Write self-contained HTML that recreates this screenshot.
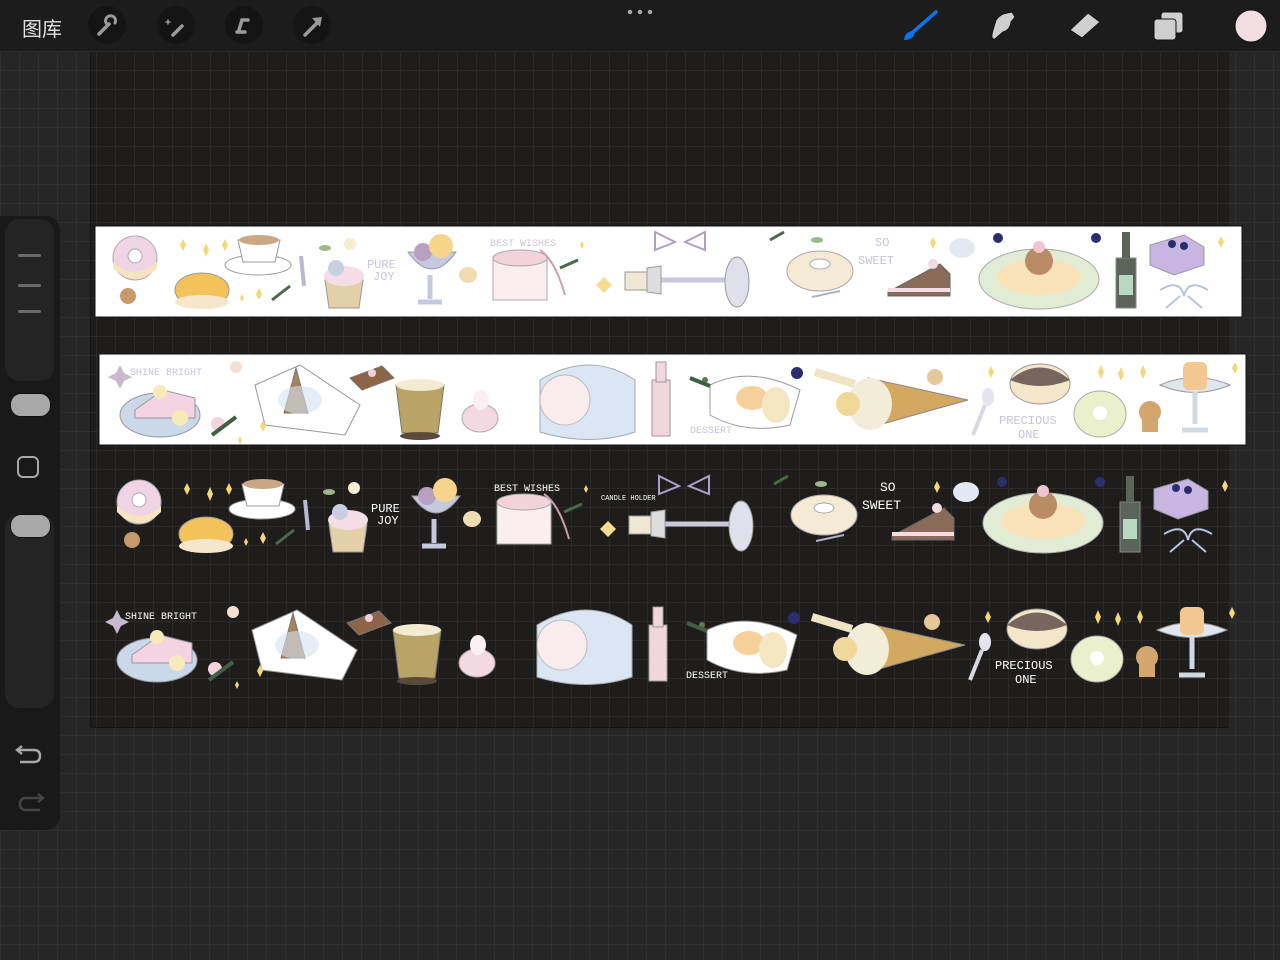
<!DOCTYPE html>
<html><head><meta charset="utf-8"><style>
html,body{margin:0;padding:0;width:1280px;height:960px;overflow:hidden;background:#252525;font-family:"Liberation Sans","Noto Sans CJK SC",sans-serif}
.bg{position:absolute;left:0;top:0;width:1280px;height:960px;background-color:#262626;background-image:linear-gradient(#2f2f2f 1px,transparent 1px),linear-gradient(90deg,#2f2f2f 1px,transparent 1px);background-size:19px 19px;background-position:0 13px}
.canvas{position:absolute;left:91px;top:51px;width:1138px;height:676px;background-color:#1e1d1c;background-image:linear-gradient(#2b2a29 1px,transparent 1px),linear-gradient(90deg,#2b2a29 1px,transparent 1px);background-size:19px 19px;background-position:5px 0;box-shadow:-1px 0 0 #151515,0 1px 0 #151515}
.top{position:absolute;left:0;top:0;width:1280px;height:51px;background:#1c1c1c}
.lib{position:absolute;left:22px;top:13px;color:#e0e0e0;font-size:20px}
.tb{position:absolute;top:6px;width:38px;height:38px;border-radius:50%;background:#141414}
.side{position:absolute;left:0;top:216px;width:60px;height:614px;background:#191919;border-radius:0 14px 14px 0}
.track{position:absolute;left:5px;width:49px;background:#242424;border-radius:14px}
.h{position:absolute;left:10px;width:39px;height:22px;border-radius:11px;background:#a8a8a8;border:1px solid #111}
.dash{position:absolute;left:18px;width:23px;height:3px;border-radius:2px;background:#6a6a6a}
</style></head><body>
<div class="bg"></div>
<div class="canvas"></div>
<div class="top">
 <div class="lib">图库</div>
 <div class="tb" style="left:88px"></div><div class="tb" style="left:157px"></div><div class="tb" style="left:225px"></div><div class="tb" style="left:293px"></div>
 <svg width="1280" height="51" style="position:absolute;left:0;top:0">
  <g fill="none" stroke="#9a9a9a" stroke-width="3.5" stroke-linecap="round">
   <path d="M99 34 L109 24"/><path d="M108 25 a5 5 0 1 1 7 -2" stroke-width="3"/>
   <path d="M173 35 L182 26"/><path d="M168 20 v4 M166 22 h4" stroke-width="1.5"/>
   <path d="M237 32 h8 M248 20 h-6 l-3 10"/>
   <path d="M305 35 L318 22"/>
  </g>
  <path d="M312 18 L322 17 L320 27 Z" fill="#9a9a9a"/>
  <circle cx="630" cy="12" r="2.2" fill="#aaa"/><circle cx="640" cy="12" r="2.2" fill="#aaa"/><circle cx="650" cy="12" r="2.2" fill="#aaa"/>
  <path d="M936 12 L912 33" stroke="#0a74f0" stroke-width="3.5" stroke-linecap="round"/>
  <path d="M904 40 Q905 32 912 31 Q916 34 913 37 Q909 40 904 40Z" fill="#0a74f0"/>
  <path d="M993 30 L996 20 Q1000 14 1007 13 L1012 12 L1015 17 L1011 22 Q1010 30 1003 32 L995 39 Q990 40 993 30Z" fill="#cfcfcf" stroke="#111"/>
  <path d="M1070 30 L1088 13 L1100 22 L1082 38 Z" fill="#cfcfcf" stroke="#111"/>
  <rect x="1161" y="12" width="22" height="21" rx="3" fill="#cfcfcf" stroke="#111"/>
  <rect x="1154" y="19" width="22" height="21" rx="3" fill="#cfcfcf" stroke="#111"/>
  <circle cx="1251" cy="26" r="16" fill="#f2dde2" stroke="#111"/>
 </g></svg>
</div>
<div class="side">
 <div class="track" style="top:3px;height:162px"></div>
 <div class="dash" style="top:38px"></div><div class="dash" style="top:68px"></div><div class="dash" style="top:94px"></div>
 <div class="h" style="top:177px"></div>
 <div style="position:absolute;left:17px;top:240px;width:22px;height:22px;border:2.5px solid #a8a8a8;border-radius:6px;box-sizing:border-box"></div>
 <div class="track" style="top:298px;height:194px"></div>
 <div class="h" style="top:298px"></div>
 <svg width="60" height="100" style="position:absolute;left:0;top:520px">
  <path d="M22 10 L17 14 L22 18 M17 14 H34 Q40 14 40 20 Q40 26 34 26 H20" fill="none" stroke="#a8a8a8" stroke-width="2.4"/>
  <path d="M38 58 L43 62 L38 66 M43 62 H26 Q20 62 20 68 Q20 74 26 74 H40" fill="none" stroke="#444" stroke-width="2.4"/>
 </svg>
</div>
<svg width="1280" height="960" style="position:absolute;left:0;top:0" font-family="Liberation Mono,monospace">
<defs>
<g id="r1">
 <circle cx="135" cy="258" r="22" fill="#f1d4e3" stroke="#aaa"/><circle cx="135" cy="256" r="7" fill="#fff" stroke="#aaa"/>
 <path d="M113 262 Q135 282 157 262 L157 268 Q135 290 113 268Z" fill="#f5e4c0"/>
 <circle cx="128" cy="296" r="8" fill="#c69a6a"/>
 <path d="M180 245 l3 -6 3 6 -3 6z M203 250 l3 -7 3 7 -3 7z M222 245 l3 -6 3 6 -3 6z" fill="#f3d87a"/>
 <ellipse cx="202" cy="290" rx="27" ry="17" fill="#f4c25a" stroke="#999"/>
 <ellipse cx="202" cy="302" rx="27" ry="7" fill="#f6e6cc"/>
 <ellipse cx="258" cy="265" rx="33" ry="10" fill="#fff" stroke="#999"/>
 <path d="M238 240 h42 l-5 22 h-32z" fill="#fff" stroke="#999"/><ellipse cx="259" cy="240" rx="20" ry="5" fill="#c8a882"/>
 <path d="M301 256 l3 30" stroke="#b8b8d0" stroke-width="4"/>
 <path d="M325 280 h38 l-4 28 h-30z" fill="#e3cfa8" stroke="#999"/><ellipse cx="344" cy="276" rx="20" ry="10" fill="#f5dde6"/><circle cx="336" cy="268" r="8" fill="#c9cfe0"/>
 <circle cx="350" cy="244" r="6" fill="#f6ecd0"/>
 <path d="M408 252 Q432 286 456 252Z" fill="#c6c8dd" stroke="#999"/><path d="M430 275 v24 M418 302 h24" stroke="#c6c8dd" stroke-width="5"/>
 <circle cx="423" cy="252" r="9" fill="#b8a0c0"/><circle cx="441" cy="246" r="12" fill="#f6d58a"/>
 <ellipse cx="468" cy="275" rx="9" ry="8" fill="#f0dcb0"/>
 <path d="M493 258 h54 v42 h-54z" fill="#fbeef0" stroke="#aaa"/><ellipse cx="520" cy="258" rx="27" ry="8" fill="#f2d3dc" stroke="#aaa"/>
 <path d="M540 250 Q555 260 565 295" stroke="#c8a0b0" fill="none" stroke-width="2"/>
 <path d="M655 232 l20 10 -20 8z M705 232 l-20 10 20 8z" fill="none" stroke="#b0a0c8" stroke-width="2"/>
 <path d="M596 285 l8 -8 8 8 -8 8z" fill="#f4dc90"/>
 <path d="M625 272 h30 v18 h-30z" fill="#eee8d4" stroke="#999"/>
 <path d="M655 280 h70" stroke="#c8c8d8" stroke-width="5"/><ellipse cx="737" cy="282" rx="12" ry="25" fill="#e0e0ea" stroke="#999"/>
 <path d="M647 268 l14 -2 v28 l-14 -2z" fill="#ddd" stroke="#999"/>
 <ellipse cx="820" cy="271" rx="33" ry="20" fill="#f5ebd4" stroke="#aaa"/><ellipse cx="820" cy="264" rx="10" ry="5" fill="#fff" stroke="#aaa"/>
 <path d="M812 297 l28 -6" stroke="#b0b0c8" stroke-width="2"/>
 <path d="M888 292 l52 -28 10 10 v22 h-62z" fill="#8a6a58" stroke="#666"/><path d="M888 290 h62" stroke="#f5dde6" stroke-width="4"/>
 <circle cx="933" cy="264" r="5" fill="#f0dde2"/>
 <ellipse cx="962" cy="248" rx="13" ry="10" fill="#e4e8f2"/>
 <circle cx="998" cy="238" r="5" fill="#2b2d6e"/><circle cx="1096" cy="238" r="5" fill="#2b2d6e"/>
 <ellipse cx="1039" cy="279" rx="60" ry="30" fill="#e2ecd4" stroke="#aaa"/><ellipse cx="1039" cy="277" rx="42" ry="18" fill="#f9e2b8"/>
 <circle cx="1039" cy="261" r="14" fill="#b98c66"/><circle cx="1039" cy="247" r="6" fill="#f0c4d0"/>
 <path d="M1116 258 h20 v50 h-20z" fill="#5a6458" stroke="#888" /><rect x="1122" y="232" width="8" height="26" fill="#5a6458"/><rect x="1119" y="275" width="14" height="20" fill="#b8d8c0"/>
 <path d="M1150 245 l34 -10 20 12 v18 l-30 10 -24 -10z" fill="#c8b6e2" stroke="#999"/><circle cx="1172" cy="244" r="4" fill="#2b2d6e"/><circle cx="1184" cy="246" r="4" fill="#2b2d6e"/>
 <path d="M1160 290 q20 -12 24 6 q4 -18 24 -6 M1180 296 l-14 12 M1188 296 l14 12" stroke="#b8c4dc" fill="none" stroke-width="2"/>
 <path d="M1218 242 l3 -6 3 6 -3 6z M256 294 l3 -6 3 6 -3 6z M240 298 l2 -4 2 4 -2 4z M580 245 l2 -4 2 4 -2 4z M930 243 l3 -6 3 6 -3 6z" fill="#f3d87a"/>
 <path d="M272 300 l18 -14 M770 240 l14 -8 M560 268 l18 -8" stroke="#4a6a4a" stroke-width="3"/>
 <ellipse cx="325" cy="248" rx="6" ry="3" fill="#9ab888"/><ellipse cx="817" cy="240" rx="6" ry="3" fill="#9ab888"/>
</g>
<g id="r2">
 <path d="M120 365 l4 8 8 4 -8 4 -4 8 -4 -8 -8 -4 8 -4z" fill="#c8b8cc"/>
 <ellipse cx="160" cy="415" rx="40" ry="22" fill="#cad8ea" stroke="#999"/>
 <path d="M135 410 l28 -20 32 8 v20 l-60 0z" fill="#f4d4e2" stroke="#999"/><circle cx="180" cy="418" r="8" fill="#f5eab8"/><circle cx="160" cy="392" r="7" fill="#f5eab8"/>
 <path d="M255 385 l45 -20 60 40 -15 30 -80 -10z" fill="#fff" stroke="#999"/>
 <path d="M296 368 l-12 45 h24z" fill="#a8825a" stroke="#777"/><ellipse cx="300" cy="400" rx="22" ry="14" fill="#d4e2f2" opacity=".6"/>
 <path d="M350 378 l32 -12 12 12 -32 12z" fill="#8c6448" stroke="#777"/><circle cx="372" cy="373" r="4" fill="#f0d0dc"/>
 <path d="M396 385 h48 l-6 48 h-36z" fill="#b9a466" stroke="#777"/><ellipse cx="420" cy="385" rx="24" ry="6" fill="#f3ecd4"/><ellipse cx="420" cy="436" rx="20" ry="4" fill="#5a4a3a"/>
 <ellipse cx="480" cy="418" rx="18" ry="14" fill="#f4d8e2" stroke="#aaa"/><ellipse cx="481" cy="400" rx="8" ry="10" fill="#f8f0f2"/>
 <path d="M540 380 q50 -30 95 0 v52 q-45 15 -95 0z" fill="#dbe6f4" stroke="#aaa"/><ellipse cx="565" cy="400" rx="25" ry="25" fill="#f8ecec" stroke="#bbb"/>
 <path d="M652 380 h18 v56 h-18z" fill="#f2d6de" stroke="#999"/><rect x="656" y="362" width="10" height="20" fill="#f2d6de" stroke="#999"/>
 <circle cx="705" cy="380" r="3" fill="#5a7a5a"/>
 <path d="M710 385 q40 -20 90 5 l-10 35 q-45 10 -80 -10z" fill="#fff" stroke="#999"/><ellipse cx="752" cy="398" rx="16" ry="12" fill="#f6d29a"/><ellipse cx="776" cy="405" rx="14" ry="18" fill="#f4e6c0"/>
 <circle cx="797" cy="373" r="6" fill="#2b2d6e"/>
 <path d="M815 372 l40 12" stroke="#efe4c4" stroke-width="8"/>
 <path d="M868 378 l100 22 -100 28z" fill="#d3a860" stroke="#888"/><ellipse cx="870" cy="404" rx="22" ry="26" fill="#f2edd8"/><circle cx="848" cy="404" r="12" fill="#efd898"/>
 <circle cx="935" cy="377" r="8" fill="#e4c898"/>
 <path d="M985 405 l-12 30" stroke="#d8d8e0" stroke-width="4"/><ellipse cx="988" cy="397" rx="6" ry="9" fill="#e4e4ec"/>
 <ellipse cx="1040" cy="384" rx="30" ry="20" fill="#f4e6c8" stroke="#999"/><path d="M1010 380 q30 -25 60 0 q-30 12 -60 0z" fill="#76665e"/>
 <ellipse cx="1100" cy="414" rx="26" ry="23" fill="#eaf0cc" stroke="#aaa"/><circle cx="1100" cy="413" r="7" fill="#fff"/>
 <circle cx="1150" cy="412" r="11" fill="#d2a66c"/><rect x="1142" y="418" width="16" height="14" fill="#d2a66c"/>
 <path d="M1160 385 q35 -15 70 0 q-35 15 -70 0z" fill="#e0e6ee" stroke="#999"/><path d="M1195 392 v32 M1182 430 h26" stroke="#d0d8e0" stroke-width="5"/><rect x="1183" y="362" width="24" height="28" rx="6" fill="#f2c890"/>
 <path d="M1098 372 l3 -7 3 7 -3 7z M1118 374 l3 -7 3 7 -3 7z M1140 372 l3 -7 3 7 -3 7z M988 372 l3 -6 3 6 -3 6z M238 440 l2 -4 2 4 -2 4z M260 426 l3 -6 3 6 -3 6z M1232 368 l3 -6 3 6 -3 6z" fill="#f3d87a"/>
 <circle cx="218" cy="424" r="7" fill="#f3d4dc"/><path d="M212 435 l24 -18 M690 378 l20 8" stroke="#3f5e46" stroke-width="4"/>
 <circle cx="236" cy="367" r="6" fill="#f4e0d0"/>
</g>
</defs>
<rect x="95" y="226" width="1147" height="91" fill="#fff" stroke="#111"/>
<use href="#r1"/>
<text x="367" y="268" font-size="12" fill="#c4c4dc">PURE</text><text x="373" y="280" font-size="12" fill="#c4c4dc">JOY</text>
<text x="490" y="246" font-size="10" fill="#cdc4dc">BEST WISHES</text>
<text x="875" y="246" font-size="12" fill="#c4c4dc">SO</text><text x="858" y="264" font-size="12" fill="#c4c4dc">SWEET</text>
<rect x="99" y="354" width="1147" height="91" fill="#fff" stroke="#111"/>
<use href="#r2"/>
<text x="130" y="375" font-size="10" fill="#c4c4dc">SHINE BRIGHT</text>
<text x="690" y="433" font-size="10" fill="#c4c4dc">DESSERT</text>
<text x="999" y="424" font-size="12" fill="#c4c4dc">PRECIOUS</text><text x="1018" y="438" font-size="12" fill="#c4c4dc">ONE</text>
<use href="#r1" transform="translate(4,244)"/>
<text x="371" y="512" font-size="12" fill="#fff">PURE</text><text x="377" y="524" font-size="12" fill="#fff">JOY</text>
<text x="494" y="491" font-size="10" fill="#fff">BEST WISHES</text>
<text x="601" y="500" font-size="7" fill="#fff">CANDLE HOLDER</text>
<text x="880" y="491" font-size="13" fill="#fff">SO</text><text x="862" y="509" font-size="13" fill="#fff">SWEET</text>
<use href="#r2" transform="translate(-3,245)"/>
<text x="125" y="619" font-size="10" fill="#fff">SHINE BRIGHT</text>
<text x="686" y="678" font-size="10" fill="#fff">DESSERT</text>
<text x="995" y="669" font-size="12" fill="#fff">PRECIOUS</text><text x="1015" y="683" font-size="12" fill="#fff">ONE</text>
</svg>
</body></html>
